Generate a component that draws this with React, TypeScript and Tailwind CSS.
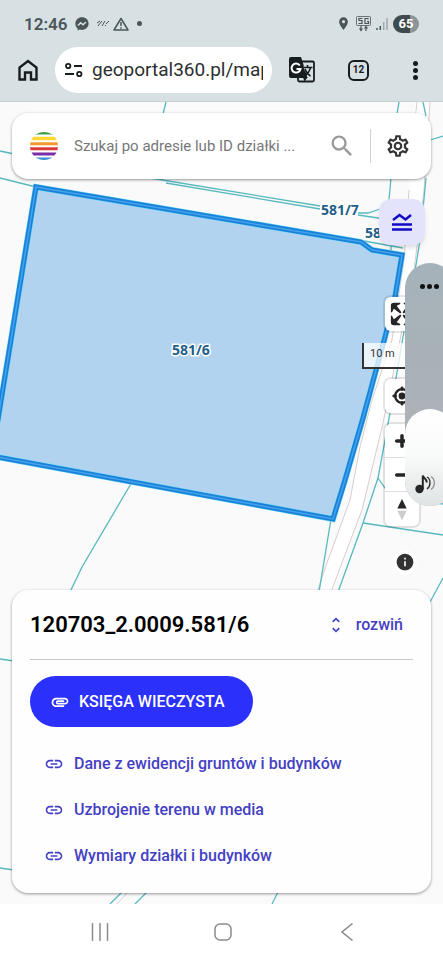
import type { ReactNode } from 'react';
import {
  MdAttachment,
  MdInfo,
  MdLink,
  MdLocationOn,
  MdOutlineSettings,
  MdSearch,
  MdUnfoldMore,
} from 'react-icons/md';
import clsx from 'clsx';

const PARCEL = '36,187 361,242 372,250 402,255 395,297 385,337 363,418 345,480 333,519 -8,456';

const BOUNDARIES = [
  'M0 151L14 154',
  'M0 178L36 187',
  'M166 102L163 114',
  'M150 178L320 206',
  'M166 183L320 209',
  'M358 213L368 213L380 209',
  'M358 215L385 219',
  'M364 241L403 248',
  'M399 102L397 114',
  'M391 178L389 200',
  'M391 245L391 253',
  'M423 102L426 116',
  'M426 178L420 240L412 290L403 337L390 413L378 478L363 523L338 592',
  'M430 140L443 136',
  'M378 478L387 491',
  'M363 523L443 535',
  'M436 503L443 504',
  'M429 604L443 578',
  'M331 519L319 592',
  'M132 482L82 567L70 592',
  'M0 659L14 661',
  'M0 868L14 870',
  'M122 892L110 904',
  'M147 892L135 904',
  'M278 892L272 904',
];

const LINKS = [
  'Dane z ewidencji gruntów i budynków',
  'Uzbrojenie terenu w media',
  'Wymiary działki i budynków',
];

/** Status bar with clock, notifications, signal and battery */
function StatusBar() {
  return (
    <div className="flex h-[47px] items-center justify-between px-6 text-[#4b5558]">
      <div className="flex items-center gap-2">
        <span className="text-[17px] font-semibold leading-5">12:46</span>
        <svg className="size-[14px]" viewBox="0 0 14 14">
          <path fill="currentColor" d="M7 .3C3.2 .3 .4 3 .4 6.700c0 2 .8 3.600 2.200 4.700v2.200l2-1c.7 .2 1.500 .3 2.400 .3 3.800 0 6.600-2.700 6.600-6.300S10.800 .3 7 .3z" />
          <path d="M3 8.600L5.700 5.800l2.300 2L11 5" fill="none" stroke="#d7e1e4" strokeWidth="1.5" />
        </svg>
        <svg className="h-[7px] w-3" viewBox="0 0 12 7" fill="none" stroke="currentColor">
          <path d="M0 3l3-2M1 6l4-5M5 6l3-5M9 4l3-3M8 6l1-1" />
        </svg>
        <svg className="-ml-1 h-[14px] w-4" viewBox="0 0 16 14" fill="none" stroke="currentColor" strokeWidth="1.5">
          <path d="M8 1.500L15 13H1z" strokeLinejoin="round" />
          <path d="M8 5v4M8 10.300v1.500" />
        </svg>
        <span className="size-[5px] rounded-full bg-[#4b5558]" />
      </div>
      <div className="flex items-center gap-[5px]">
        <MdLocationOn className="size-[15px]" />
        <svg className="h-4 w-[15px]" viewBox="0 0 15 16" fill="none" stroke="currentColor">
          <rect x=".5" y=".5" width="14" height="9" rx="1" strokeWidth=".8" />
          <path d="M6.500 2.500H3v2h3v3H2.500M12 3.500V2.500H9v5h3.500V5.500H11" strokeWidth="1.2" />
          <path d="M5 10v4M3.500 12.500L5 14.500l1.500-2M10 15v-4M8.500 12.500L10 10.500l1.500 2" strokeWidth="1.2" />
        </svg>
        <svg className="h-[13px] w-3" viewBox="0 0 12 13" stroke="currentColor" strokeWidth="1.5">
          <path d="M1 13v-2M4.300 13V9" />
          <path d="M7.700 13V5M11 13V1" opacity=".4" />
        </svg>
        <span className="flex h-[18px] w-[26px] items-center justify-center rounded-full bg-linear-to-r from-[#40494c] from-65% to-[#8b9598] to-65% text-[13px] font-bold leading-4 text-white">
          65
        </span>
      </div>
    </div>
  );
}

/** Browser toolbar */
function Toolbar() {
  return (
    <div className="flex items-center pb-[9px] pl-[18px] pr-[22px] text-[#171c1e]">
      <button type="button" aria-label="Home">
        <svg className="h-[22px] w-5" viewBox="0 0 20 22" fill="none" stroke="currentColor" strokeWidth="2.4">
          <path d="M1.500 20.500V8.500L10 2l8.500 6.500v12h-5.500v-7H7v7z" />
        </svg>
      </button>
      <div className="ml-[17px] flex h-[46px] flex-1 items-center gap-[9px] rounded-full bg-white pl-[10px] pr-[9px]">
        <svg className="h-4 w-[18px] shrink-0" viewBox="0 0 18 16" fill="none" stroke="currentColor" strokeWidth="1.8">
          <circle cx="3.2" cy="4" r="2.2" />
          <path d="M9 4h8M0 12h9" />
          <circle cx="14.3" cy="12" r="2.2" />
        </svg>
        <input
          type="text"
          aria-label="Address"
          defaultValue="geoportal360.pl/map"
          className="w-0 min-w-0 flex-1 bg-transparent text-[19px] leading-6 text-[#2b2f31] outline-none"
        />
      </div>
      <button type="button" aria-label="Translate" className="ml-[17px]">
        <svg className="size-[26px]" viewBox="0 0 26 26">
          <rect x="9" y="4.5" width="16" height="20" rx="1.5" fill="none" stroke="currentColor" strokeWidth="1.8" />
          <path d="M2 0h10l1.500 4.500 5 16.500H2a2 2 0 0 1-2-2V2a2 2 0 0 1 2-2z" fill="currentColor" />
          <path d="M14 9.500h5l-2.500 6z" fill="#d7e1e4" />
          <path d="M10.800 8.500A4.500 4.500 0 1 0 11.500 12H7.500" fill="none" stroke="#fff" strokeWidth="2" />
          <path d="M14 10.500H23.500M18.500 8v2.500M21.500 10.500c-1 4-3 6.500-6 8.500M16 12c1 3 3 5.500 5.500 7" fill="none" stroke="currentColor" strokeWidth="1.6" />
          <path d="M14 20.500h4.500l-3 4z" fill="currentColor" />
        </svg>
      </button>
      <button
        type="button"
        aria-label="Tabs"
        className="ml-[33px] flex size-[21px] items-center justify-center rounded-[6px] border-2 border-[#171c1e] text-[10px] font-bold leading-3"
      >
        12
      </button>
      <button type="button" aria-label="Menu" className="ml-10 flex w-3 flex-col items-center gap-[2px] py-1">
        <span className="size-[5px] rounded-full bg-[#171c1e]" />
        <span className="size-[5px] rounded-full bg-[#171c1e]" />
        <span className="size-[5px] rounded-full bg-[#171c1e]" />
      </button>
    </div>
  );
}

/** Cadastral map with the selected parcel */
function ParcelMap() {
  return (
    <svg
      className="absolute inset-0 h-full w-full"
      viewBox="0 102 443 802"
      preserveAspectRatio="xMinYMin slice"
    >
      <path d="M415 102L409 190L404 260L392 340L372 400L360 447L350 500L328 560L317 592L333 592L362 510L383 423L398 350L414 270L424 190L430 102z" fill="#fff" />
      <g fill="none" stroke="#d8cdca" strokeWidth="1">
        <path d="M417 102L415 120M409 190L404 260L392 340L372 400L360 447L350 500L328 560L317 592" />
        <path d="M430 102L424 190L414 270L398 350L383 423L362 510L331 592" />
        <path d="M128 892L117 904" />
      </g>
      <g fill="none" stroke="#57b8bf" strokeWidth="1.3">
        {BOUNDARIES.map((d) => (
          <path key={d} d={d} />
        ))}
      </g>
      <polygon points={PARCEL} fill="#b2d3ef" stroke="#66d9ff" strokeWidth="6" />
      <polygon points={PARCEL} fill="none" stroke="#1c81d6" strokeWidth="5" />
      <polygon points={PARCEL} fill="none" stroke="#42a3ee" strokeWidth="1.5" />
      <g
        className="font-['Open_Sans',sans-serif] text-[14px] font-bold"
        fill="#1f5f88"
        stroke="#fff"
        strokeWidth="3"
        strokeLinejoin="round"
        paintOrder="stroke"
      >
        <text x="172" y="355">581/6</text>
        <text x="321" y="215">581/7</text>
        <text x="365" y="238">58</text>
      </g>
    </svg>
  );
}

interface MapButtonProps {
  label: string;
  className?: string;
  children: ReactNode;
}

function MapButton({ label, className, children }: MapButtonProps) {
  return (
    <button type="button" aria-label={label} className={clsx('block size-[34px] bg-white text-[#262626]', className)}>
      <svg className="size-[34px]" viewBox="0 0 29 29" fill="currentColor">
        {children}
      </svg>
    </button>
  );
}

/** Controls that float over the map */
function MapControls() {
  return (
    <>
      <button
        type="button"
        aria-label="Layers"
        className="absolute right-[18px] top-[97px] flex size-[46px] items-center justify-center rounded-xl bg-[#e3e4fc] shadow-md"
      >
        <svg className="h-[18px] w-5" viewBox="0 0 20 18" fill="none" stroke="#1208c4" strokeWidth="2.4">
          <path d="M1 7l6.500-5 6 4.500L19 2M0 11.500h20M0 16.500h20" />
        </svg>
      </button>

      <div className="absolute right-6 top-[195px] overflow-hidden rounded-md shadow-[0_0_0_2px_rgba(0,0,0,0.1)]">
        <MapButton label="Fullscreen">
          <path d="M24 16v5.500c0 1.750-.75 2.500-2.500 2.500H16v-1l3-1.500-4-5.500 1-1 5.500 4 1.500-3h1zM6 16l1.500 3 5.500-4 1 1-4 5.500 3 1.500v1H7.500C5.750 24 5 23.250 5 21.500V16h1zm7-11v1l-3 1.500 4 5.500-1 1-5.500-4L6 13H5V7.500C5 5.750 5.750 5 7.500 5H13zm11 2.500c0-1.750-.75-2.500-2.500-2.500H16v1l3 1.500-4 5.500 1 1 5.500-4 1.500 3h1V7.500z" />
        </MapButton>
      </div>
      <div className="absolute right-6 top-[277px] overflow-hidden rounded-md shadow-[0_0_0_2px_rgba(0,0,0,0.1)]">
        <MapButton label="My location">
          <circle cx="14.5" cy="14.5" r="5.8" fill="none" stroke="currentColor" strokeWidth="2" />
          <circle cx="14.5" cy="14.5" r="2.9" />
          <path d="M14.500 7.500v1.500M14.500 20v1.500M7.500 14.500h1.500M20 14.500h1.500" stroke="currentColor" strokeWidth="2.4" strokeLinecap="round" />
        </MapButton>
      </div>
      <div className="absolute right-6 top-[322px] divide-y divide-[#ddd] overflow-hidden rounded-md shadow-[0_0_0_2px_rgba(0,0,0,0.1)]">
        <MapButton label="Zoom in">
          <path d="M14.500 8.500c-.75 0-1.500.75-1.500 1.500v3h-3c-.75 0-1.500.75-1.500 1.500S9.250 16 10 16h3v3c0 .75.75 1.500 1.500 1.500S16 19.750 16 19v-3h3c.75 0 1.500-.75 1.500-1.500S19.750 13 19 13h-3v-3c0-.75-.75-1.500-1.500-1.500z" />
        </MapButton>
        <MapButton label="Zoom out">
          <path d="M10 13c-.75 0-1.500.75-1.500 1.500S9.250 16 10 16h9c.75 0 1.500-.75 1.500-1.500S19.750 13 19 13h-9z" />
        </MapButton>
        <MapButton label="Reset bearing">
          <path d="M10.500 14l4-8 4 8h-8z" />
          <path d="M10.500 16l4 8 4-8h-8z" fill="#ccc" />
        </MapButton>
      </div>

      <div className="absolute right-[21px] top-[241px] h-[26px] w-[60px] border-2 border-t-0 border-[#333] bg-white/75 pl-[6px] text-[11px] leading-[22px] text-[#333]">
        10 m
      </div>

      <button type="button" aria-label="Attribution" className="absolute right-[26px] top-[448px] rounded-full bg-white p-[2px] text-[#333]">
        <MdInfo className="size-5" />
      </button>

      {/* Volume panel sliding in from the edge */}
      <div className="absolute -right-3 top-[161px] flex h-[243px] w-[50px] flex-col justify-between rounded-[25px] bg-linear-to-b from-[#a5b2b9] via-[#aab1b8] to-[#b4b5b8]">
        <div className="flex gap-[2px] pl-[15px] pt-[21px]">
          <span className="size-[5px] rounded-full bg-[#111]" />
          <span className="size-[5px] rounded-full bg-[#111]" />
          <span className="size-[5px] rounded-full bg-[#111]" />
        </div>
        <div className="flex h-[97px] items-end rounded-[25px] bg-linear-to-b from-white via-[#f8f9f9] to-[#dfe3e3] pb-3 pl-[10px]">
          <svg className="h-5 w-[22px]" viewBox="0 0 22 20" fill="none" stroke="#262626">
            <circle cx="4.5" cy="15" r="4.2" fill="#262626" stroke="none" />
            <path d="M7.800 15V1.500c1 3.500 4 3 4 7" strokeWidth="2" />
            <path d="M12 3c4 2 4 9 0 12" strokeWidth="1.3" />
            <path d="M16 2.500c4.500 3 4.500 9.500 0 13" stroke="#8c8f90" strokeWidth="1.3" />
          </svg>
        </div>
      </div>
    </>
  );
}

function SearchBar() {
  return (
    <div className="relative flex h-[66px] items-center rounded-2xl bg-white pl-[18px] pr-5 shadow-[0_1px_3px_rgba(0,0,0,0.4)]">
      <svg className="size-7 shrink-0" viewBox="0 0 28 28">
        <clipPath id="logo">
          <circle cx="14" cy="14" r="14" />
        </clipPath>
        <g clipPath="url(#logo)">
          <path fill="#43a047" d="M0 0h28v2.600H0z" />
          <path fill="#fdd835" d="M0 4.800h28v3.400H0z" />
          <path fill="#f29a2e" d="M0 10.200h28v3H0z" />
          <path fill="#d93a3a" d="M0 15.200h28v3H0z" />
          <path fill="#7b2fa5" d="M0 20.500h28v3H0z" />
          <path fill="#3a8fd6" d="M0 25.500h28V28H0z" />
        </g>
      </svg>
      <input
        type="text"
        aria-label="Szukaj"
        placeholder="Szukaj po adresie lub ID działki ..."
        className="ml-4 w-0 min-w-0 flex-1 bg-transparent text-[15px] leading-5 outline-none placeholder:text-[#777]"
      />
      <button type="button" aria-label="Wyszukaj" className="ml-3 text-[#999]">
        <MdSearch className="size-7" />
      </button>
      <div className="ml-[14px] h-[34px] w-px bg-[#d2d2d2]" />
      <button type="button" aria-label="Ustawienia" className="ml-[14px] text-[#333]">
        <MdOutlineSettings className="size-[26px]" />
      </button>
    </div>
  );
}

/** Details of the selected parcel */
function ParcelCard() {
  return (
    <section className="relative rounded-2xl bg-[#fefefe] px-[18px] pb-[14px] shadow-[0_1px_3px_rgba(0,0,0,0.4)]">
      <header className="flex h-[70px] items-center justify-between border-b border-[#c8c8c8] pr-[10px]">
        <h1 className="text-[22px] font-semibold leading-7 text-black">120703_2.0009.581/6</h1>
        <button type="button" className="flex items-center gap-[10px] text-base font-medium text-[#443fc4]">
          <MdUnfoldMore className="size-5" />
          rozwiń
        </button>
      </header>
      <button
        type="button"
        className="mt-4 flex h-[51px] items-center gap-[9px] rounded-full bg-[#2b30fb] pl-5 pr-7 text-base font-medium text-white"
      >
        <MdAttachment className="size-5" />
        KSIĘGA WIECZYSTA
      </button>
      <nav className="mt-[14px] flex flex-col pl-[14px]">
        {LINKS.map((label) => (
          <a key={label} href="#" className="flex h-[46px] items-center gap-[10px] text-base font-medium text-[#443fc4]">
            <MdLink className="size-5" />
            {label}
          </a>
        ))}
      </nav>
    </section>
  );
}

function SystemNav() {
  return (
    <nav className="grid h-14 grid-cols-3 items-center justify-items-center bg-white pl-[38px] pr-[34px] text-[#8c8c8c]">
      <button type="button" aria-label="Recents">
        <svg className="size-[18px]" viewBox="0 0 18 18" stroke="currentColor" strokeWidth="1.5">
          <path d="M1.500 0v18M9 0v18M16.500 0v18" />
        </svg>
      </button>
      <button type="button" aria-label="Home screen">
        <svg className="size-[18px]" viewBox="0 0 18 18" fill="none" stroke="currentColor" strokeWidth="1.5">
          <rect x="1" y="1" width="16" height="16" rx="5" />
        </svg>
      </button>
      <button type="button" aria-label="Back">
        <svg className="h-[18px] w-3" viewBox="0 0 12 18" fill="none" stroke="currentColor" strokeWidth="1.5">
          <path d="M11.500 .5L1 9l10.500 8.500" />
        </svg>
      </button>
    </nav>
  );
}

export default function App() {
  return (
    <div className="flex min-h-screen flex-col bg-white font-[Roboto,sans-serif]">
      <header className="bg-[#d7e1e4] shadow-[inset_0_-1px_0_#c6d0d3]">
        <StatusBar />
        <Toolbar />
      </header>
      <main className="relative flex flex-1 flex-col justify-between overflow-hidden bg-[#fafafa] px-3 py-[11px]">
        <ParcelMap />
        <MapControls />
        <SearchBar />
        <ParcelCard />
      </main>
      <SystemNav />
    </div>
  );
}
